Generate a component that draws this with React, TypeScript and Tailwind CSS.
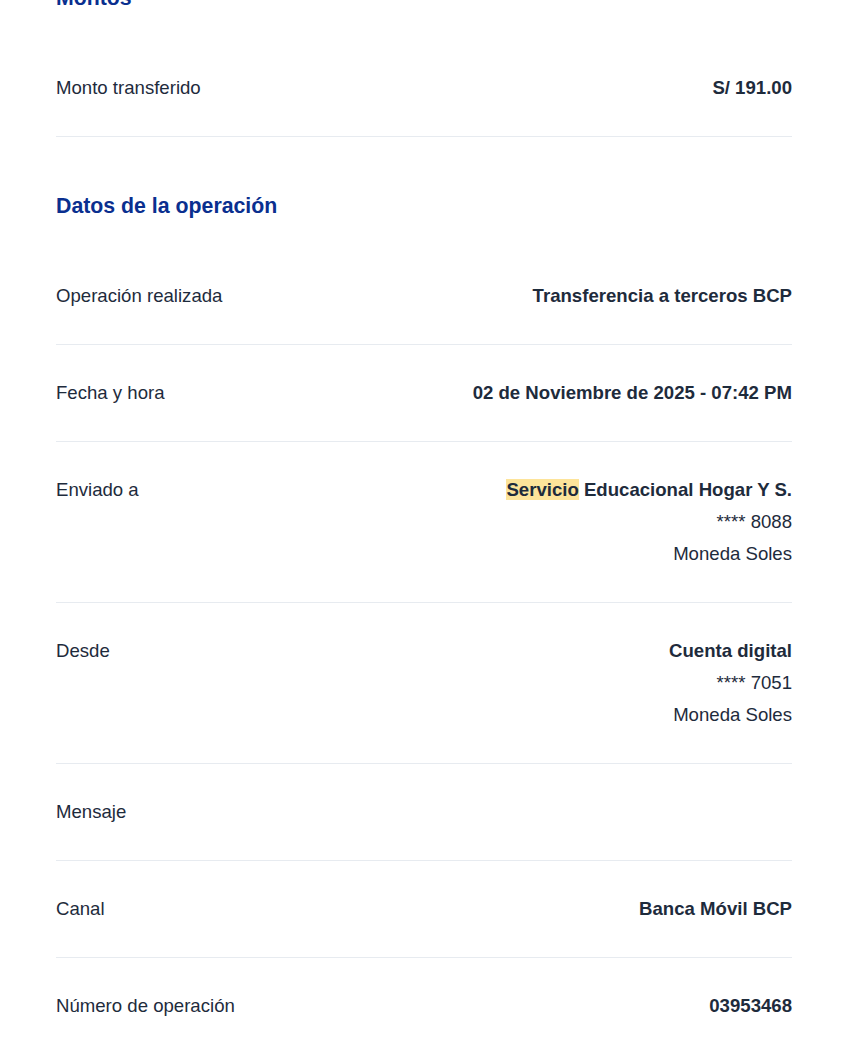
import React from "react";

type Row = { label: string; values?: React.ReactNode[] };

const montos: Row[] = [{ label: "Monto transferido", values: [<b key="m">S/ 191.00</b>] }];

const datos: Row[] = [
  { label: "Operación realizada", values: [<b key="a">Transferencia a terceros BCP</b>] },
  { label: "Fecha y hora", values: [<b key="a">02 de Noviembre de 2025 - 07:42 PM</b>] },
  {
    label: "Enviado a",
    values: [
      <b key="a">
        <span className="bg-[#fde49a]">Servicio</span> Educacional Hogar Y S.
      </b>,
      "**** 8088",
      "Moneda Soles",
    ],
  },
  {
    label: "Desde",
    values: [<b key="a">Cuenta digital</b>, "**** 7051", "Moneda Soles"],
  },
  { label: "Mensaje" },
  { label: "Canal", values: [<b key="a">Banca Móvil BCP</b>] },
  { label: "Número de operación", values: [<b key="a">03953468</b>] },
];

function Section({ title, rows }: { title: string; rows: Row[] }) {
  return (
    <section className="pt-[55px]">
      <h2 className="text-[21.3px] leading-7 font-bold text-[#0a2f8f] mb-7">{title}</h2>
      {rows.map((r) => (
        <div
          key={r.label}
          className="flex justify-between py-9 border-b border-[#e7ebf0] text-[18.6px] leading-6"
        >
          <span>{r.label}</span>
          <div className="flex flex-col items-end gap-2 text-right">
            {(r.values ?? []).map((v, i) => (
              <span key={i}>{v}</span>
            ))}
          </div>
        </div>
      ))}
    </section>
  );
}

export default function App() {
  return (
    <div
      className="bg-white text-[#1e2b3c] px-14 -mt-[71px] pb-10"
      style={{ fontFamily: '"Liberation Sans", Arial, sans-serif' }}
    >
      <Section title="Montos" rows={montos} />
      <Section title="Datos de la operación" rows={datos} />
    </div>
  );
}
